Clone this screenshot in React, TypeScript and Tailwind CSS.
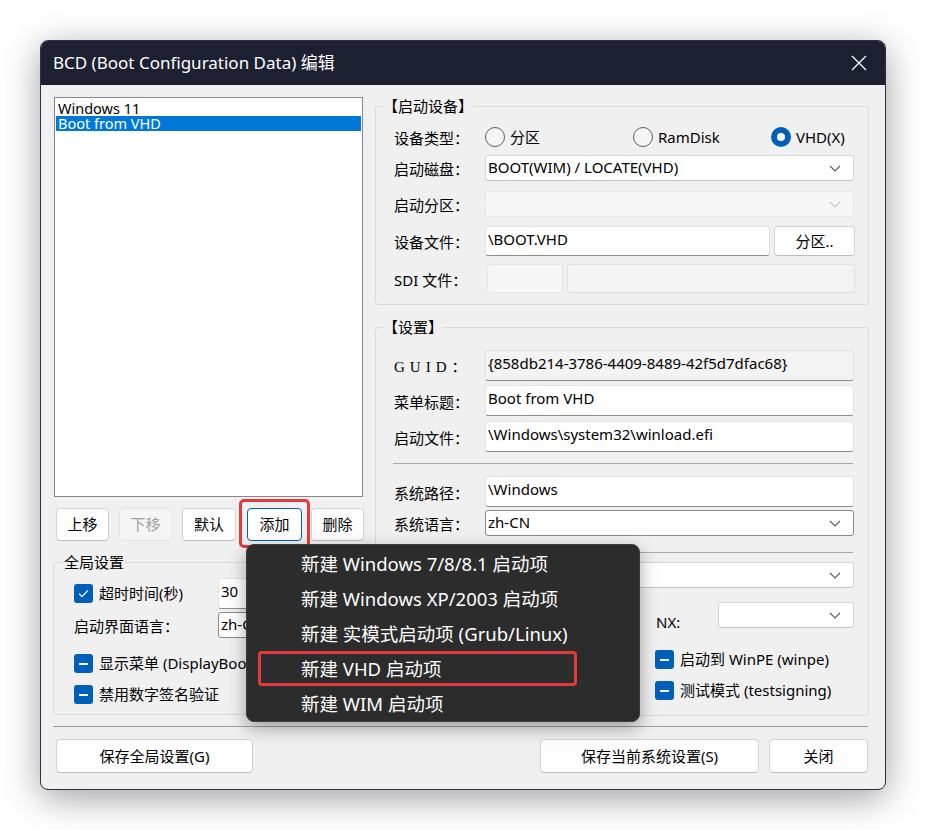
import React from "react";

const F = "font-['Noto_Sans','Noto_Sans_CJK_SC',sans-serif]";

function Chevron({ light }: { light?: boolean }) {
  return (
    <svg width="12" height="7" viewBox="0 0 12 7" className="shrink-0">
      <path d="M1 1l5 5 5-5" fill="none" stroke={light ? "#c4c4c4" : "#5a5a5a"} strokeWidth="1.1" />
    </svg>
  );
}

function Combo({ text, className, disabled, dark }: { text?: string; className: string; disabled?: boolean; dark?: boolean }) {
  return (
    <div
      className={
        "flex items-center justify-between pl-[2px] pr-[12px] rounded-[3px] border " +
        (disabled
          ? "bg-[#f7f7f7] border-[#e6e6e6] "
          : dark
          ? "bg-white border-[#8a8a8a] "
          : "bg-white border-[#d6d6d6] border-b-[#c4c4c4] ") +
        className
      }
    >
      <span className="text-[15px] leading-none text-black pb-[2px] whitespace-nowrap">{text}</span>
      <Chevron light={disabled} />
    </div>
  );
}

function Field({ text, className, readOnly }: { text?: string; className: string; readOnly?: boolean }) {
  return (
    <div
      className={
        "flex items-start pt-[2px] pl-[2px] rounded-[3px] border border-[#e2e2e2] border-b-[#8c8c8c] " +
        (readOnly ? "bg-[#f3f3f3] " : "bg-white ") +
        className
      }
    >
      <span className="text-[15px] leading-[20px] text-black whitespace-nowrap">{text}</span>
    </div>
  );
}

function Btn({ label, className, disabled, focus }: { label: string; className: string; disabled?: boolean; focus?: boolean }) {
  return (
    <div
      className={
        "flex items-center justify-center rounded-[4px] border text-[15px] " +
        (disabled
          ? "bg-[#f5f5f5] border-[#e5e5e5] text-[#a0a0a0] "
          : focus
          ? "bg-white border-[#005fb8] text-black "
          : "bg-[#fdfdfd] border-[#d3d3d3] border-b-[#bdbdbd] text-black ") +
        className
      }
    >
      {label}
    </div>
  );
}

function Radio({ label, checked, className }: { label: string; checked?: boolean; className?: string }) {
  return (
    <div className={"flex items-center " + (className ?? "")}>
      {checked ? (
        <div className="w-[20px] h-[20px] rounded-full bg-[#005fb8] flex items-center justify-center">
          <div className="w-[8px] h-[8px] rounded-full bg-white" />
        </div>
      ) : (
        <div className="w-[20px] h-[20px] rounded-full bg-[#f5f5f5] border border-[#5d5d5d]" />
      )}
      <span className="ml-[5px] text-[15px] text-black">{label}</span>
    </div>
  );
}

function Check({ label, mode, className }: { label?: string; mode: "check" | "dash"; className?: string }) {
  return (
    <div className={"flex items-center h-[19px] " + (className ?? "")}>
      <div className="w-[19px] h-[19px] rounded-[3px] bg-[#005fb8] flex items-center justify-center shrink-0">
        {mode === "check" ? (
          <svg width="11" height="9" viewBox="0 0 11 9">
            <path d="M1 4.6l3 3L10 1.4" fill="none" stroke="white" strokeWidth="1.2" />
          </svg>
        ) : (
          <div className="w-[9px] h-[2px] bg-white" />
        )}
      </div>
      {label && <span className="ml-[6px] text-[15px] leading-[19px] text-black whitespace-nowrap">{label}</span>}
    </div>
  );
}

function Legend({ text, className }: { text: string; className: string }) {
  return (
    <div className={"absolute -top-[11px] bg-[#f0f0f0] text-[15px] leading-[20px] text-black " + className}>{text}</div>
  );
}

function Row({ label, children, className, serif }: { label: string; children: React.ReactNode; className?: string; serif?: boolean }) {
  return (
    <div className={"flex items-center pl-[18px] " + (className ?? "")}>
      <div
        className={
          "w-[91px] shrink-0 text-[15px] leading-[20px] text-black pt-[2px] " +
          (serif ? "font-['Liberation_Serif','Noto_Sans_CJK_SC',serif] tracking-[5px]" : "")
        }
      >
        {label}
      </div>
      {children}
    </div>
  );
}

const menuItems = [
  "新建 Windows 7/8/8.1 启动项",
  "新建 Windows XP/2003 启动项",
  "新建 实模式启动项 (Grub/Linux)",
  "新建 VHD 启动项",
  "新建 WIM 启动项",
];

export default function App() {
  return (
    <div className={"min-h-screen bg-white pt-[40px] pl-[40px] " + F}>
      <div className="relative w-[846px] h-[750px] rounded-[8px] border border-[#2b3042] bg-[#f0f0f0] shadow-[0_8px_36px_rgba(0,0,0,0.38)]">
        {/* title bar */}
        <div className="h-[44px] rounded-t-[7px] bg-[#1c2030] flex items-center justify-between pl-[12px] pr-[18px]">
          <span className="text-[17px] text-white leading-none pb-[1px]">BCD (Boot Configuration Data) 编辑</span>
          <svg width="16" height="16" viewBox="0 0 16 16">
            <path d="M1 1l14 14M15 1L1 15" stroke="white" strokeWidth="1.3" />
          </svg>
        </div>

        <div className="flex pl-[12px]">
          {/* left column */}
          <div className="w-[312px] flex flex-col">
            <div className="mt-[12px] ml-[1px] w-[309px] h-[400px] bg-white border border-[#828790] pt-[3px] px-[1px]">
              <div className="leading-[15px] text-[14.5px] text-black pl-[2px]">Windows 11</div>
              <div className="leading-[15px] text-[14.5px] text-white bg-[#0078d7] pl-[2px]">Boot from VHD</div>
            </div>
            <div className="flex mt-[11px] pl-[3px]">
              <Btn label="上移" className="w-[53px] h-[33px]" />
              <Btn label="下移" className="ml-[10px] w-[53px] h-[33px]" disabled />
              <Btn label="默认" className="ml-[10px] w-[54px] h-[33px]" />
              <Btn label="添加" className="ml-[11px] w-[55px] h-[33px]" focus />
              <Btn label="删除" className="ml-[9px] w-[53px] h-[33px]" />
            </div>
            <div className="relative mt-[21px] h-[153px] border border-[#dadada] rounded-[3px] flex flex-col">
              <Legend text="全局设置" className="left-[9px] px-[1px]" />
              <div className="mt-[15px] flex items-center h-[31px]">
                <Check label="超时时间(秒)" mode="check" className="ml-[20px] w-[144px]" />
                <Field text="30" className="w-[137px] h-[31px]" />
              </div>
              <div className="mt-[3px] flex items-center h-[26px]">
                <span className="ml-[20px] w-[144px] text-[15px] text-black pt-[3px]">启动界面语言：</span>
                <Combo text="zh-CN" className="w-[137px] h-[26px]" dark />
              </div>
              <Check label="显示菜单 (DisplayBootMenu)" mode="dash" className="mt-[16px] ml-[20px]" />
              <Check label="禁用数字签名验证" mode="dash" className="mt-[12px] ml-[20px]" />
            </div>
          </div>

          {/* right column */}
          <div className="ml-[10px] w-[494px] flex flex-col">
            <div className="relative mt-[21px] h-[199px] border border-[#dadada] rounded-[3px] flex flex-col">
              <Legend text="【启动设备】" className="left-[7px]" />
              <Row label="设备类型：" className="mt-[19px] h-[22px]">
                <Radio label="分区" className="w-[148px]" />
                <Radio label="RamDisk" className="w-[138px]" />
                <Radio label="VHD(X)" checked />
              </Row>
              <Row label="启动磁盘：" className="mt-[7px]">
                <Combo text="BOOT(WIM) / LOCATE(VHD)" className="w-[369px] h-[26px]" />
              </Row>
              <Row label="启动分区：" className="mt-[10px]">
                <Combo className="w-[369px] h-[26px]" disabled />
              </Row>
              <Row label="设备文件：" className="mt-[9px]">
                <Field text="\BOOT.VHD" className="w-[285px] h-[30px]" />
                <Btn label="分区.." className="ml-[4px] w-[81px] h-[30px]" />
              </Row>
              <Row label="SDI 文件：" className="mt-[8px]">
                <div className="ml-[2px] w-[76px] h-[29px] rounded-[3px] bg-[#f7f7f7] border border-[#e6e6e6]" />
                <div className="ml-[4px] w-[288px] h-[29px] rounded-[2px] bg-[#f3f3f3] border border-[#e0e0e0]" />
              </Row>
            </div>

            <div className="relative mt-[22px] h-[389px] border border-[#dadada] rounded-[3px] flex flex-col">
              <Legend text="【设置】" className="left-[7px]" />
              <Row label="GUID：" serif className="mt-[22px]">
                <Field text="{858db214-3786-4409-8489-42f5d7dfac68}" className="w-[369px] h-[31px]" readOnly />
              </Row>
              <Row label="菜单标题：" className="mt-[4px]">
                <Field text="Boot from VHD" className="w-[369px] h-[31px]" />
              </Row>
              <Row label="启动文件：" className="mt-[5px]">
                <Field text="\Windows\system32\winload.efi" className="w-[369px] h-[31px]" />
              </Row>
              <div className="mt-[11px] ml-[17px] mr-[15px] h-px bg-[#a8a8a8]" />
              <Row label="系统路径：" className="mt-[12px]">
                <Field text="\Windows" className="w-[369px] h-[31px]" />
              </Row>
              <Row label="系统语言：" className="mt-[3px]">
                <Combo text="zh-CN" className="w-[369px] h-[26px]" dark />
              </Row>
              <div className="mt-[16px] ml-[17px] mr-[15px] h-px bg-[#a8a8a8]" />
              <div className="mt-[9px] pl-[109px]">
                <Combo className="w-[369px] h-[26px]" />
              </div>
              <div className="mt-[14px] flex items-center pl-[109px] h-[26px]">
                <Combo className="w-[150px] h-[26px]" />
                <span className="ml-[21px] w-[62px] text-[15px] text-black pt-[14px]">NX:</span>
                <Combo className="w-[136px] h-[26px]" />
              </div>
              <div className="mt-[22px] flex pl-[18px]">
                <Check mode="dash" className="w-[261px]" />
                <Check label="启动到 WinPE (winpe)" mode="dash" />
              </div>
              <div className="mt-[12px] flex pl-[18px]">
                <Check mode="dash" className="w-[261px]" />
                <Check label="测试模式 (testsigning)" mode="dash" />
              </div>
            </div>
          </div>
        </div>

        <div className="mt-[10px] ml-[12px] mr-[17px] h-px bg-[#a0a0a0]" />
        <div className="flex mt-[12px] pl-[15px]">
          <Btn label="保存全局设置(G)" className="w-[197px] h-[34px]" />
          <Btn label="保存当前系统设置(S)" className="ml-[287px] w-[219px] h-[34px]" />
          <Btn label="关闭" className="ml-[10px] w-[99px] h-[34px]" />
        </div>

        {/* annotation around add button */}
        <div className="absolute left-[198px] top-[458px] w-[71px] h-[49px] border-[3px] border-[#e5393b] rounded-[5px]" />

        {/* popup menu */}
        <div className="absolute left-[205px] top-[503px] w-[394px] h-[178px] rounded-[8px] bg-[#2c2c2c] border border-[#3c3c3c] shadow-[0_6px_18px_rgba(0,0,0,0.35)] pt-[1px]">
          {menuItems.map((t, i) =>
            i === 3 ? (
              <div
                key={t}
                className="mx-[11px] w-[319px] h-[35px] border-[3px] border-[#e5393b] rounded-[4px] flex items-center pl-[40px] text-[18.5px] text-white whitespace-nowrap"
              >
                {t}
              </div>
            ) : (
              <div key={t} className="h-[35px] flex items-center pl-[54px] text-[18.5px] text-white whitespace-nowrap">
                {t}
              </div>
            )
          )}
        </div>
      </div>
    </div>
  );
}
